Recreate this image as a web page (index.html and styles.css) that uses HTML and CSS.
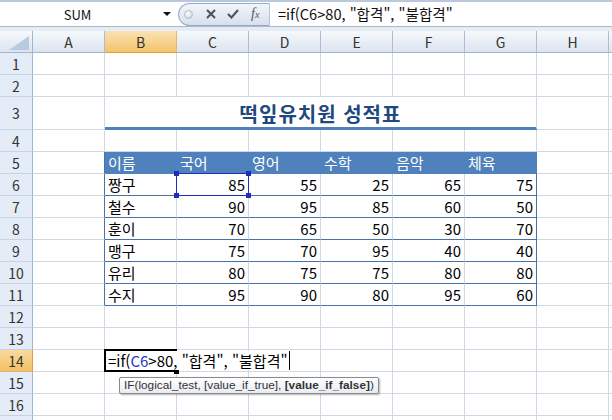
FILE: index.html
```html
<!DOCTYPE html>
<html lang="ko">
<head>
  <meta charset="UTF-8">
  <title>성적표</title>
  <link rel="stylesheet" href="styles.css">
</head>
<body>
  <div class="formula-bar">
    <div class="name-box">SUM</div>
    <div class="name-arrow"></div>
    <div class="fx-buttons">
      <span class="knob"></span>
      <svg class="btn-cancel" width="10" height="10" viewBox="0 0 10 10"><path d="M1 1L9 9M9 1L1 9" stroke="#505050" stroke-width="2"/></svg>
      <svg class="btn-enter" width="12" height="10" viewBox="0 0 12 10"><path d="M1 5L4.5 8.5L11 1" fill="none" stroke="#505050" stroke-width="2"/></svg>
      <span class="btn-fx">f<small>x</small></span>
    </div>
    <div class="formula-input">=if(C6&gt;80, "합격", "불합격"</div>
  </div>
  <div class="bar-gap"></div>

  <div class="sheet">
    <div class="row head">
      <div class="corner"><span class="corner-tri"></span></div>
      <div class="col-h">A</div><div class="col-h sel">B</div><div class="col-h">C</div><div class="col-h">D</div>
      <div class="col-h">E</div><div class="col-h">F</div><div class="col-h">G</div><div class="col-h">H</div><div class="col-h"></div>
    </div>
    <div class="row"><div class="row-h">1</div><div></div><div></div><div></div><div></div><div></div><div></div><div></div><div></div><div></div></div>
    <div class="row"><div class="row-h">2</div><div></div><div></div><div></div><div></div><div></div><div></div><div></div><div></div><div></div></div>
    <div class="row tall">
      <div class="row-h">3</div><div></div>
      <div class="title">떡잎유치원 성적표</div>
      <div></div><div></div>
    </div>
    <div class="row"><div class="row-h">4</div><div></div><div></div><div></div><div></div><div></div><div></div><div></div><div></div><div></div></div>
    <div class="row">
      <div class="row-h">5</div><div class="edge"></div>
      <div class="th">이름</div><div class="th">국어</div><div class="th">영어</div><div class="th">수학</div><div class="th">음악</div><div class="th">체육</div>
      <div></div><div></div>
    </div>
    <div class="row">
      <div class="row-h">6</div><div class="edge"></div>
      <div class="td">짱구</div>
      <div class="td num picked">85<i class="hd tl"></i><i class="hd tr"></i><i class="hd bl"></i><i class="hd br"></i></div>
      <div class="td num">55</div><div class="td num">25</div><div class="td num">65</div><div class="td num last">75</div>
      <div></div><div></div>
    </div>
    <div class="row">
      <div class="row-h">7</div><div class="edge"></div>
      <div class="td">철수</div><div class="td num">90</div><div class="td num">95</div><div class="td num">85</div><div class="td num">60</div><div class="td num last">50</div>
      <div></div><div></div>
    </div>
    <div class="row">
      <div class="row-h">8</div><div class="edge"></div>
      <div class="td">훈이</div><div class="td num">70</div><div class="td num">65</div><div class="td num">50</div><div class="td num">30</div><div class="td num last">70</div>
      <div></div><div></div>
    </div>
    <div class="row">
      <div class="row-h">9</div><div class="edge"></div>
      <div class="td">맹구</div><div class="td num">75</div><div class="td num">70</div><div class="td num">95</div><div class="td num">40</div><div class="td num last">40</div>
      <div></div><div></div>
    </div>
    <div class="row">
      <div class="row-h">10</div><div class="edge"></div>
      <div class="td">유리</div><div class="td num">80</div><div class="td num">75</div><div class="td num">75</div><div class="td num">80</div><div class="td num last">80</div>
      <div></div><div></div>
    </div>
    <div class="row">
      <div class="row-h">11</div><div class="edge"></div>
      <div class="td">수지</div><div class="td num">95</div><div class="td num">90</div><div class="td num">80</div><div class="td num">95</div><div class="td num last">60</div>
      <div></div><div></div>
    </div>
    <div class="row"><div class="row-h">12</div><div></div><div></div><div></div><div></div><div></div><div></div><div></div><div></div><div></div></div>
    <div class="row"><div class="row-h">13</div><div></div><div></div><div></div><div></div><div></div><div></div><div></div><div></div><div></div></div>
    <div class="row">
      <div class="row-h sel">14</div><div></div>
      <div class="active">
        <span class="edit-text">=if(<span class="ref">C6</span>&gt;80, "합격", "불합격"</span>
        <div class="tip"><span>IF(logical_test, [value_if_true], <b>[value_if_false]</b>)</span></div>
      </div>
      <div></div><div></div><div></div><div></div><div></div><div></div><div></div>
    </div>
    <div class="row"><div class="row-h">15</div><div></div><div></div><div></div><div></div><div></div><div></div><div></div><div></div><div></div></div>
    <div class="row"><div class="row-h">16</div><div></div><div></div><div></div><div></div><div></div><div></div><div></div><div></div><div></div></div>
    <div class="row"><div class="row-h"></div><div></div><div></div><div></div><div></div><div></div><div></div><div></div><div></div><div></div></div>
  </div>
</body>
</html>
```

FILE: styles.css
```css
*{
  margin: 0;
  padding: 0;
  box-sizing: border-box;
}
body{
  width: 612px;
  height: 420px;
  overflow: hidden;
  background-color: #fff;
  font-family: "Noto Sans CJK KR", "Noto Sans", sans-serif;
  color: #000;
}

/* 수식 입력줄 */
.formula-bar{
  height: 27px;
  display: flex;
  align-items: center;
  border-top: 2px solid #b9c8dc;
  border-bottom: 1px solid #a9b8cc;
  background-color: #fff;
}
.name-box{
  width: 155px;
  text-align: center;
  font-size: 13px;
  line-height: 1;
  color: #111;
}
.name-arrow{
  margin-left: 8px;
  width: 0;
  height: 0;
  border-left: 4px solid transparent;
  border-right: 4px solid transparent;
  border-top: 4px solid #111;
}
.fx-buttons{
  margin-left: 7px;
  width: 92px;
  height: 23px;
  display: flex;
  align-items: center;
  border: 1px solid #9aaac4;
  border-right-color: #b5c3d6;
  border-radius: 12px 0 0 12px;
  background: linear-gradient(#f1f5fb, #d6e0ee);
}
.knob{
  margin-left: 5px;
  width: 9px;
  height: 9px;
  border-radius: 50%;
  border: 1px solid #b3bcc9;
  background: radial-gradient(circle at 40% 35%, #fff, #c3cbd6);
}
.btn-cancel{
  margin-left: 13px;
}
.btn-enter{
  margin-left: 11px;
}
.btn-fx{
  margin-left: 12px;
  font-family: "Liberation Serif", serif;
  font-style: italic;
  font-size: 14px;
  line-height: 1;
  color: #555;
}
.btn-fx small{
  font-size: 10px;
}
.formula-input{
  flex: 1;
  padding-left: 8px;
  font-size: 14.6px;
  line-height: 1;
  color: #111;
}
.bar-gap{
  height: 4px;
  background-color: #e6ecf4;
}

/* 시트 */
.row{
  display: grid;
  grid-template-columns: 33px repeat(8, 72px) 1fr;
  height: 22px;
}
.row.tall{
  height: 33px;
}
.row > div{
  border-right: 1px solid #d0d7e5;
  border-bottom: 1px solid #d0d7e5;
  display: flex;
  align-items: center;
  font-size: 14px;
  line-height: 1;
  white-space: nowrap;
}
.row > div:last-child{
  border-right: none;
}

.head .col-h, .head .corner{
  justify-content: center;
  background: linear-gradient(#f6f9fc, #dce4ef);
  border-right-color: #a9bdd4;
  border-bottom-color: #9eb6ce;
  color: #333;
}
.head .col-h.sel{
  background: linear-gradient(#fae2b3, #f3c46b);
  border-bottom: 1px solid #f29536;
  border-right-color: #e9b669;
}
.head .corner{
  justify-content: flex-end;
  align-items: flex-end;
  padding: 0 3px 2px 0;
  border-right-color: #9eb6ce;
}
.corner-tri{
  width: 0;
  height: 0;
  border-left: 20px solid transparent;
  border-bottom: 14px solid #b8cae2;
}

.row .row-h{
  justify-content: center;
  background-color: #e4ecf7;
  border-right-color: #9eb6ce;
  border-bottom-color: #c5d3e4;
  color: #333;
}
.row .row-h.sel{
  background: linear-gradient(#f9d9a0, #f2c165);
  border-right: 1px solid #f29536;
  border-bottom-color: #e9b669;
}

.row .title{
  grid-column: span 6;
  justify-content: center;
  font-size: 20px;
  font-weight: bold;
  letter-spacing: 1px;
  color: #1f497d;
  border-right-color: #d0d7e5;
  border-bottom: 3px solid #4f81bd;
  padding-top: 3px;
}

/* 표 */
.row .edge{
  border-right-color: #4a72a4;
}
.row .th{
  background-color: #4f81bd;
  border-right-color: #4f81bd;
  border-bottom-color: #4f81bd;
  color: #fff;
  font-size: 15px;
  padding-left: 3px;
}
.row .td{
  border-bottom-color: #4a72a4;
  font-size: 15px;
  padding-left: 3px;
}
.row .td.num{
  justify-content: flex-end;
  padding: 0 3px 0 0;
}
.row .td.last{
  border-right-color: #4a72a4;
}

/* 참조 범위 C6 */
.picked{
  position: relative;
}
.picked::before{
  content: "";
  position: absolute;
  left: -1px;
  top: -1px;
  right: -1px;
  bottom: -1px;
  border: 1px solid #1d2fb8;
}
.hd{
  position: absolute;
  width: 5px;
  height: 5px;
  background-color: #1d2fb8;
}
.hd.tl{ left: -3px; top: -3px; }
.hd.tr{ right: -3px; top: -3px; }
.hd.bl{ left: -3px; bottom: -3px; }
.hd.br{ right: -3px; bottom: -3px; }

/* 편집 중인 셀 B14 */
.active{
  position: relative;
  overflow: visible;
}
.active::after{
  content: "";
  position: absolute;
  left: -1px;
  top: -1px;
  right: -1px;
  bottom: -1px;
  border: 2px solid #000;
}
.active::before{
  content: "";
  position: absolute;
  right: -3px;
  bottom: -3px;
  width: 5px;
  height: 5px;
  background-color: #000;
}
.edit-text{
  position: relative;
  z-index: 2;
  margin-left: 1px;
  padding: 2px 1px 2px 2px;
  background-color: #fff;
  border-right: 1px solid #000;
  font-size: 15px;
}
.edit-text .ref{
  color: #2a38c4;
}
.tip{
  position: absolute;
  left: 14px;
  top: 27px;
  z-index: 3;
  height: 17px;
  padding: 0 4px;
  font-family: "Liberation Sans", Arial, sans-serif;
  font-size: 11.8px;
  line-height: 15px;
  color: #333;
  background: linear-gradient(#ffffff, #e9ebf2);
  border: 1px solid #8a8a8a;
  border-radius: 2px;
  box-shadow: 1px 1px 2px rgba(0, 0, 0, 0.3);
}
```
